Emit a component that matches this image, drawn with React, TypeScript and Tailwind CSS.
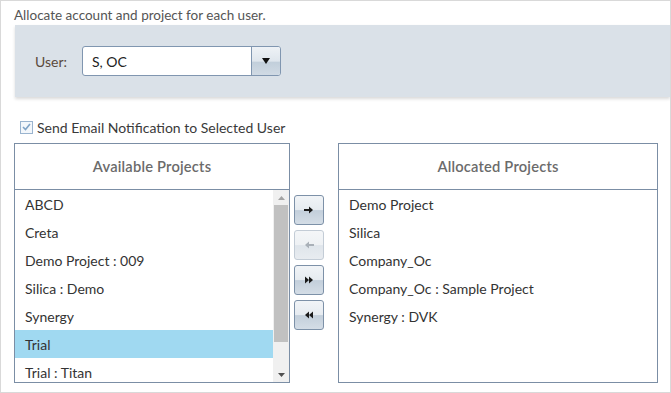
import React from 'react'

const available = ['ABCD', 'Creta', 'Demo Project : 009', 'Silica : Demo', 'Synergy', 'Trial', 'Trial : Titan']
const allocated = ['Demo Project', 'Silica', 'Company_Oc', 'Company_Oc : Sample Project', 'Synergy : DVK']

function MoveButton({ kind, disabled }: { kind: 'right' | 'left' | 'allRight' | 'allLeft'; disabled?: boolean }) {
  const fill = disabled ? '#a9b0b8' : '#1a1a1a'
  return (
    <div
      className={`w-[30px] h-[30px] rounded-[3px] border flex items-center justify-center ${
        disabled
          ? 'border-[#c3ccd6] bg-[linear-gradient(#f4f6f8_0%,#eef1f4_50%,#dfe5eb_52%,#e8ecf0_100%)]'
          : 'border-[#7d91a8] bg-[linear-gradient(#f1f4f7_0%,#e6ebf0_50%,#c3cfdb_52%,#d4dde6_100%)]'
      }`}
    >
      <svg width="12" height="10" viewBox="0 0 12 10">
        {kind === 'right' && (
          <>
            <rect x="1" y="4" width="6" height="2" fill={fill} />
            <path d="M6 1.5 L10 5 L6 8.5 Z" fill={fill} />
          </>
        )}
        {kind === 'left' && (
          <>
            <rect x="5" y="4" width="6" height="2" fill={fill} />
            <path d="M6 1.5 L2 5 L6 8.5 Z" fill={fill} />
          </>
        )}
        {kind === 'allRight' && (
          <>
            <path d="M2 1.5 L6 5 L2 8.5 Z" fill={fill} />
            <path d="M6 1.5 L10 5 L6 8.5 Z" fill={fill} />
          </>
        )}
        {kind === 'allLeft' && (
          <>
            <path d="M6 1.5 L2 5 L6 8.5 Z" fill={fill} />
            <path d="M10 1.5 L6 5 L10 8.5 Z" fill={fill} />
          </>
        )}
      </svg>
    </div>
  )
}

export default function App() {
  return (
    <div
      className="w-[671px] h-[393px] border border-[#d9d9d9] bg-white text-[#333] overflow-hidden"
      style={{ fontFamily: 'Lato, "Open Sans", sans-serif' }}
    >
      <div className="h-[24px] pl-[13px] pt-[5px] text-[13.5px] leading-[18px] text-[#555]">
        Allocate account and project for each user.
      </div>

      <div className="ml-[14px] h-[72px] bg-[#dae1e8] shadow-[0_2px_3px_rgba(0,0,0,0.15)] flex items-center pl-[20px]">
        <span className="text-[14px] text-[#5a4a3c] w-[47px]">User:</span>
        <div className="w-[199px] h-[30px] rounded-[3px] border border-[#8096b0] bg-white flex overflow-hidden">
          <div className="flex-1 pl-[9px] flex items-center text-[14px] text-[#222]">S, OC</div>
          <div className="w-[29px] border-l border-[#8096b0] bg-[linear-gradient(#eef2f6_0%,#dfe6ed_50%,#c2cfdb_55%,#d0dae4_100%)] flex items-center justify-center">
            <svg width="8" height="6" viewBox="0 0 8 6">
              <path d="M0 0 H8 L4 6 Z" fill="#111" />
            </svg>
          </div>
        </div>
      </div>

      <div className="flex items-center mt-[22px] pl-[19px] gap-[4px] h-[16px]">
        <div className="w-[13px] h-[13px] border border-[#9ab4cf] bg-[#f3f7fb] flex items-center justify-center">
          <svg width="9" height="8" viewBox="0 0 9 8">
            <path d="M1 4 L3.5 6.5 L8 1" stroke="#7fa3c6" strokeWidth="1.6" fill="none" />
          </svg>
        </div>
        <span className="text-[14px] text-[#3a3a3a]">Send Email Notification to Selected User</span>
      </div>

      <div className="flex mt-[8px] pl-[13px]">
        <div className="w-[276px] h-[240px] border border-[#7b8ea5] flex flex-col">
          <div className="h-[46px] shrink-0 border-b border-[#7b8ea5] flex items-center justify-center text-[14.7px] font-semibold text-[#6b6b6b] tracking-[0.2px]">
            Available Projects
          </div>
          <div className="flex flex-1 overflow-hidden">
            <div className="flex-1">
              {available.map((item) => (
                <div
                  key={item}
                  className={`h-[28px] flex items-center pl-[10px] text-[14px] ${item === 'Trial' ? 'bg-[#a0d9f1]' : ''}`}
                >
                  {item}
                </div>
              ))}
            </div>
            <div className="w-[16px] bg-[#f0f0f0] flex flex-col items-center">
              <div className="h-[15px] flex items-center justify-center">
                <svg width="7" height="4" viewBox="0 0 7 4">
                  <path d="M0 4 L3.5 0 L7 4 Z" fill="#a3a3a3" />
                </svg>
              </div>
              <div className="w-[14px] h-[137px] bg-[#c1c1c1]" />
              <div className="flex-1" />
              <div className="h-[15px] flex items-center justify-center">
                <svg width="7" height="4" viewBox="0 0 7 4">
                  <path d="M0 0 H7 L3.5 4 Z" fill="#505050" />
                </svg>
              </div>
            </div>
          </div>
        </div>

        <div className="ml-[4px] mt-[52px] flex flex-col gap-[5px]">
          <MoveButton kind="right" />
          <MoveButton kind="left" disabled />
          <MoveButton kind="allRight" />
          <MoveButton kind="allLeft" />
        </div>

        <div className="ml-[14px] w-[320px] h-[240px] border border-[#7b8ea5] flex flex-col">
          <div className="h-[46px] shrink-0 border-b border-[#7b8ea5] flex items-center justify-center text-[14.7px] font-semibold text-[#6b6b6b] tracking-[0.2px]">
            Allocated Projects
          </div>
          <div>
            {allocated.map((item) => (
              <div key={item} className="h-[28px] flex items-center pl-[10px] text-[14px]">
                {item}
              </div>
            ))}
          </div>
        </div>
      </div>
    </div>
  )
}
